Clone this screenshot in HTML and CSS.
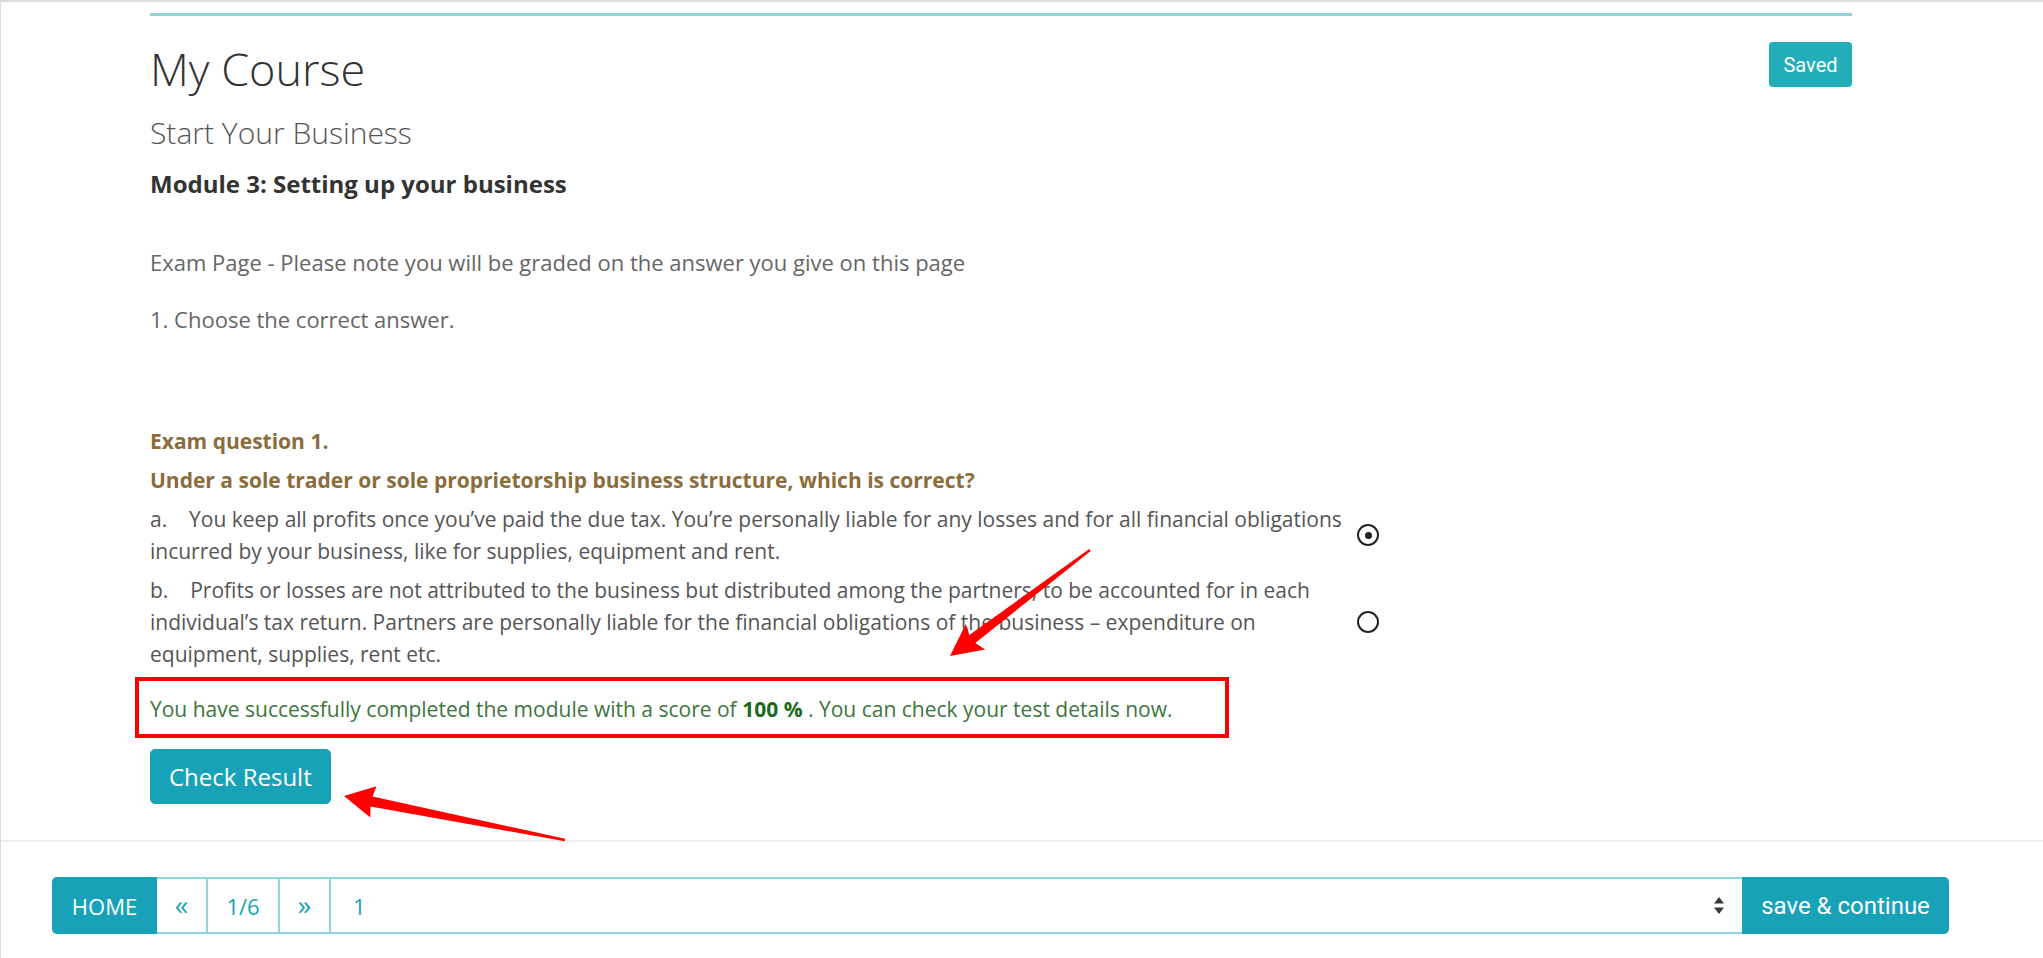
FILE: index.html
```html
<!DOCTYPE html>
<html lang="en">
<head>
  <meta charset="UTF-8">
  <meta name="viewport" content="width=device-width, initial-scale=1.0">
  <title>My Course - Start Your Business</title>
  <link rel="stylesheet" href="styles.css">
</head>
<body>
  <div class="page">
    <main class="content">
      <div class="rule"></div>

      <div class="course-head">
        <h1>My Course</h1>
        <span class="badge-saved">Saved</span>
      </div>
      <h2>Start Your Business</h2>
      <h3>Module 3: Setting up your business</h3>

      <p class="intro first">Exam Page - Please note you will be graded on the answer you give on this page</p>
      <p class="intro">1. Choose the correct answer.</p>

      <div class="question">
        <p class="q-title">Exam question 1.</p>
        <p class="q-title">Under a sole trader or sole proprietorship business structure, which is correct?</p>

        <div class="option">
          <p>a.&nbsp;&nbsp;&nbsp;&nbsp;You keep all profits once you’ve paid the due tax. You’re personally liable for any losses and for all financial obligations incurred by your business, like for supplies, equipment and rent.</p>
          <span class="radio checked"></span>
        </div>

        <div class="option">
          <p>b.&nbsp;&nbsp;&nbsp;&nbsp;Profits or losses are not attributed to the business but distributed among the partners, to be accounted for in each individual’s tax return. Partners are personally liable for the financial obligations of the business – expenditure on equipment, supplies, rent etc.</p>
          <span class="radio"></span>
        </div>
      </div>

      <div class="result-box">
        <p>You have successfully completed the module with a score of <strong>100 %</strong> . You can check your test details now.</p>
      </div>

      <button class="btn-check" type="button">Check Result</button>
    </main>

    <footer class="footer">
      <div class="nav-bar">
        <a class="nav-home" href="#">HOME</a>
        <a class="nav-cell nav-arrow" href="#">«</a>
        <span class="nav-cell nav-count">1/6</span>
        <a class="nav-cell nav-arrow" href="#">»</a>
        <div class="nav-select">
          <span>1</span>
          <svg width="10" height="17" viewBox="0 0 10 17"><path d="M5 0 L10 6.5 H0 Z M0 10.5 H10 L5 17 Z" fill="#3a3a3a"/></svg>
        </div>
        <a class="nav-save" href="#">save &amp; continue</a>
      </div>
    </footer>
  </div>

  <!-- annotation arrows drawn over the screenshot -->
  <svg class="annotations" width="2043" height="958" viewBox="0 0 2043 958">
    <polygon points="1089.3,549 969.3,635.1 965.8,623.9 950,656 985.2,649.5 975.3,643.1 1090.7,551" fill="#ff0000"/>
    <polygon points="565.2,838.8 372.5,796.6 376.5,786.2 344,796 370.3,817.6 370.5,806.4 564.8,841.2" fill="#ff0000"/>
  </svg>
</body>
</html>
```

FILE: styles.css
```css
body {
  margin: 0;
  font-family: "Open Sans", Arial, sans-serif;
  background-color: #fff;
  color: #555;
  position: relative;
}

.page {
  min-height: 958px;
  box-sizing: border-box;
  border-top: 2px solid #dcdcdc;
  border-left: 1px solid #dcdcdc;
}

.content {
  width: 1702px;
  margin-left: 149px;
  padding-top: 11px;
}

.rule {
  height: 3px;
  background-color: #8fd4d9;
}

.course-head {
  display: flex;
  justify-content: space-between;
  align-items: flex-start;
  margin-top: 23px;
}

h1 {
  margin: 0;
  font-size: 45px;
  font-weight: 300;
  line-height: 60px;
  color: #333;
}

.badge-saved {
  margin-top: 3px;
  width: 83px;
  height: 45px;
  display: flex;
  align-items: center;
  justify-content: center;
  background-color: #22adb9;
  color: #fff;
  border-radius: 4px;
  font-family: Roboto, Arial, sans-serif;
  font-size: 20px;
}

h2 {
  margin: 15px 0 0;
  font-size: 30px;
  font-weight: 300;
  line-height: 38px;
  color: #555;
}

h3 {
  margin: 17px 0 0;
  font-size: 24px;
  font-weight: 700;
  line-height: 30px;
  color: #333;
}

.intro {
  margin: 25px 0 0;
  font-size: 22px;
  line-height: 32px;
  color: #666;
}

.intro.first {
  margin-top: 47px;
}

.question {
  margin-top: 90px;
}

.question p {
  margin: 0;
  font-size: 21px;
  line-height: 32px;
}

.q-title {
  margin-bottom: 7px !important;
  font-weight: 700;
  color: #8a6d3b;
}

.option {
  display: flex;
  align-items: center;
  margin-bottom: 7px;
}

.option p {
  width: 1205px;
  color: #555;
}

.radio {
  flex: none;
  width: 22px;
  height: 22px;
  margin-left: 2px;
  box-sizing: border-box;
  border: 2.5px solid #222;
  border-radius: 50%;
  display: flex;
  align-items: center;
  justify-content: center;
}

.radio.checked::after {
  content: "";
  width: 7px;
  height: 7px;
  border-radius: 50%;
  background-color: #222;
}

.result-box {
  width: 1094px;
  margin-left: -15px;
  box-sizing: border-box;
  border: 4px solid #ff0000;
  padding: 12px 11px 9px;
}

.result-box p {
  margin: 0;
  font-size: 21px;
  line-height: 32px;
  color: #3c763d;
}

.result-box strong {
  color: #1b6a1b;
}

.btn-check {
  margin-top: 11px;
  height: 55px;
  padding: 0 18px;
  border: 1px solid #1a9fb3;
  border-radius: 5px;
  background-color: #17a2b8;
  color: #fff;
  font-family: "Open Sans", Arial, sans-serif;
  font-size: 24px;
  cursor: pointer;
}

.footer {
  margin-top: 36px;
  border-top: 2px solid #eeeeee;
  padding-top: 35px;
}

.nav-bar {
  display: flex;
  height: 57px;
  margin-left: 51px;
  width: 1897px;
  font-size: 22px;
}

.nav-bar a {
  text-decoration: none;
}

.nav-home {
  width: 105px;
  display: flex;
  align-items: center;
  justify-content: center;
  background-color: #17a2b8;
  color: #fff;
  border-radius: 5px 0 0 5px;
}

.nav-cell {
  display: flex;
  align-items: center;
  justify-content: center;
  box-sizing: border-box;
  border-top: 2px solid #8fd4dc;
  border-bottom: 2px solid #8fd4dc;
  border-right: 2px solid #8fd4dc;
  color: #1aa3b8;
}

.nav-arrow {
  width: 51px;
  font-size: 27px;
  padding-bottom: 3px;
}

.nav-count {
  width: 72px;
}

.nav-select {
  flex: 1;
  display: flex;
  align-items: center;
  justify-content: space-between;
  box-sizing: border-box;
  border-top: 2px solid #8fd4dc;
  border-bottom: 2px solid #8fd4dc;
  padding: 0 18px 0 22px;
  color: #1aa3b8;
}

.nav-save {
  width: 207px;
  display: flex;
  align-items: center;
  justify-content: center;
  background-color: #17a2b8;
  color: #fff;
  border-radius: 0 5px 5px 0;
  font-family: Roboto, Arial, sans-serif;
  font-size: 24px;
}

.annotations {
  position: absolute;
  top: 0;
  left: 0;
  pointer-events: none;
}
```
